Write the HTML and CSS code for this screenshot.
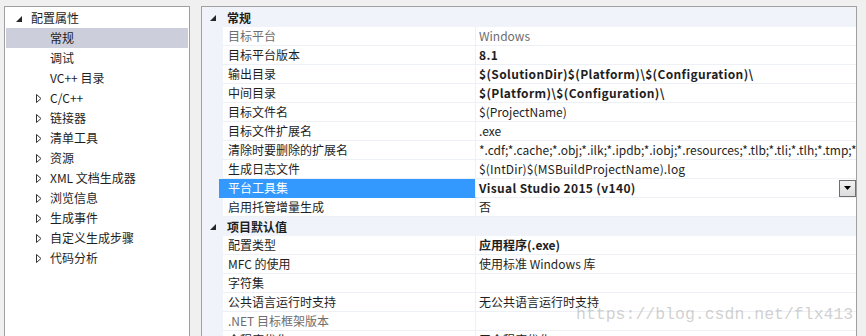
FILE: index.html
```html
<!DOCTYPE html>
<html lang="zh-CN">
<head>
<meta charset="utf-8">
<link rel="stylesheet" href="styles.css">
</head>
<body>
<div class="page">
  <div class="tree">
    <div class="node root"><svg class="exp" width="6" height="6" viewBox="0 0 6 6"><polygon points="6,0 6,6 0,6"/></svg><span>配置属性</span></div>
    <div class="node child sel"><span>常规</span></div>
    <div class="node child"><span>调试</span></div>
    <div class="node child"><span>VC++ 目录</span></div>
    <div class="node child"><svg class="col" width="6" height="9" viewBox="0 0 6 9"><polygon points="0.5,0.5 5,4.5 0.5,8.5"/></svg><span>C/C++</span></div>
    <div class="node child"><svg class="col" width="6" height="9" viewBox="0 0 6 9"><polygon points="0.5,0.5 5,4.5 0.5,8.5"/></svg><span>链接器</span></div>
    <div class="node child"><svg class="col" width="6" height="9" viewBox="0 0 6 9"><polygon points="0.5,0.5 5,4.5 0.5,8.5"/></svg><span>清单工具</span></div>
    <div class="node child"><svg class="col" width="6" height="9" viewBox="0 0 6 9"><polygon points="0.5,0.5 5,4.5 0.5,8.5"/></svg><span>资源</span></div>
    <div class="node child"><svg class="col" width="6" height="9" viewBox="0 0 6 9"><polygon points="0.5,0.5 5,4.5 0.5,8.5"/></svg><span>XML 文档生成器</span></div>
    <div class="node child"><svg class="col" width="6" height="9" viewBox="0 0 6 9"><polygon points="0.5,0.5 5,4.5 0.5,8.5"/></svg><span>浏览信息</span></div>
    <div class="node child"><svg class="col" width="6" height="9" viewBox="0 0 6 9"><polygon points="0.5,0.5 5,4.5 0.5,8.5"/></svg><span>生成事件</span></div>
    <div class="node child"><svg class="col" width="6" height="9" viewBox="0 0 6 9"><polygon points="0.5,0.5 5,4.5 0.5,8.5"/></svg><span>自定义生成步骤</span></div>
    <div class="node child"><svg class="col" width="6" height="9" viewBox="0 0 6 9"><polygon points="0.5,0.5 5,4.5 0.5,8.5"/></svg><span>代码分析</span></div>
  </div>

  <div class="grid">
    <div class="group"><div class="gut"><svg width="6" height="6" viewBox="0 0 6 6"><polygon points="6,0 6,6 0,6"/></svg></div><div class="gtitle">常规</div></div>
    <div class="row"><div class="gut"></div><div class="name dim">目标平台</div><div class="val dim">Windows</div></div>
    <div class="row"><div class="gut"></div><div class="name">目标平台版本</div><div class="val b lat">8.1</div></div>
    <div class="row"><div class="gut"></div><div class="name">输出目录</div><div class="val b lat">$(SolutionDir)$(Platform)\$(Configuration)\</div></div>
    <div class="row"><div class="gut"></div><div class="name">中间目录</div><div class="val b lat">$(Platform)\$(Configuration)\</div></div>
    <div class="row"><div class="gut"></div><div class="name">目标文件名</div><div class="val">$(ProjectName)</div></div>
    <div class="row"><div class="gut"></div><div class="name">目标文件扩展名</div><div class="val">.exe</div></div>
    <div class="row"><div class="gut"></div><div class="name">清除时要删除的扩展名</div><div class="val">*.cdf;*.cache;*.obj;*.ilk;*.ipdb;*.iobj;*.resources;*.tlb;*.tli;*.tlh;*.tmp;*.rsp;*.pgc;*.pgd;*.meta;*.tlog;*.manifest;*.res;*.pch;*.exp;*.idb</div></div>
    <div class="row"><div class="gut"></div><div class="name">生成日志文件</div><div class="val lat2">$(IntDir)$(MSBuildProjectName).log</div></div>
    <div class="row"><div class="gut"></div><div class="name sel">平台工具集</div><div class="val b drop"><span class="lat">Visual Studio 2015 (v140)</span><span class="btn"><svg width="7" height="4" viewBox="0 0 7 4"><polygon points="0,0 7,0 3.5,4"/></svg></span></div></div>
    <div class="row"><div class="gut"></div><div class="name">启用托管增量生成</div><div class="val">否</div></div>
    <div class="group"><div class="gut"><svg width="6" height="6" viewBox="0 0 6 6"><polygon points="6,0 6,6 0,6"/></svg></div><div class="gtitle">项目默认值</div></div>
    <div class="row"><div class="gut"></div><div class="name">配置类型</div><div class="val b">应用程序(.exe)</div></div>
    <div class="row"><div class="gut"></div><div class="name">MFC 的使用</div><div class="val">使用标准 Windows 库</div></div>
    <div class="row"><div class="gut"></div><div class="name">字符集</div><div class="val"></div></div>
    <div class="row"><div class="gut"></div><div class="name">公共语言运行时支持</div><div class="val">无公共语言运行时支持</div></div>
    <div class="row"><div class="gut"></div><div class="name dim">.NET 目标框架版本</div><div class="val"></div></div>
    <div class="row"><div class="gut"></div><div class="name">全程序优化</div><div class="val">无全程序优化</div></div>
  </div>
</div>
<div class="wm">https://blog.csdn.net/flx413</div>
</body>
</html>
```

FILE: styles.css
```css
html, body {
  margin: 0;
  padding: 0;
  width: 866px;
  height: 336px;
  overflow: hidden;
  background: #f0f0f0;
  font-family: "Noto Sans CJK SC", sans-serif;
  font-size: 12px;
  color: #1e1e1e;
}

.page {
  display: flex;
  gap: 11px;
  padding: 6px 0 0 4px;
}

.tree {
  width: 186px;
  height: 340px;
  border: 1px solid #a0a0a0;
  background: #ffffff;
  padding: 1px;
  box-sizing: border-box;
}

.node {
  height: 20px;
  display: flex;
  align-items: center;
  line-height: 20px;
  white-space: nowrap;
}

.node.root {
  padding-left: 10px;
}

.node.root svg {
  margin-right: 9px;
  margin-top: 1px;
  fill: #262626;
}

.node.child {
  padding-left: 44px;
}

.node.child svg {
  margin-left: -14px;
  margin-right: 8px;
}

.node .col {
  fill: none;
  stroke: #333333;
  stroke-width: 1;
}

.node.sel {
  background: #cccedb;
}

.grid {
  width: 656px;
  height: 340px;
  box-sizing: border-box;
  border: 1px solid #a0a0a0;
  background: #f0f4fa;
  padding-top: 1px;
  overflow: hidden;
}

.group {
  height: 19px;
  display: flex;
  align-items: center;
  background: #f0f4fa;
}

.gut {
  width: 21px;
  flex: none;
  height: 100%;
  display: flex;
  align-items: center;
  justify-content: center;
}

.group .gut svg {
  fill: #262626;
}

.gtitle {
  font-weight: bold;
  padding-left: 4px;
}

.row {
  height: 19px;
  display: flex;
}

.name, .val {
  background: #ffffff;
  height: 18px;
  line-height: 18px;
  border-bottom: 1px solid #edf0f5;
  white-space: nowrap;
  overflow: hidden;
}

.name {
  width: 247px;
  flex: none;
  padding-left: 5px;
  border-right: 1px solid #edf0f5;
}

.val {
  flex: 1;
  padding-left: 3px;
}

.dim {
  color: #6d6d6d;
}

.b {
  font-weight: bold;
}

.lat {
  letter-spacing: 0.35px;
}

.lat2 {
  letter-spacing: 0.15px;
}

.name.sel {
  background: #3399ff;
  color: #ffffff;
  box-shadow: -4px 0 0 #3399ff;
  border-bottom-color: #3399ff;
}

.drop {
  display: flex;
  justify-content: space-between;
  align-items: center;
}

.btn {
  width: 15px;
  height: 15px;
  border: 1px solid #6f6f6f;
  background: linear-gradient(#f2f2f2, #dcdcdc);
  display: flex;
  align-items: center;
  justify-content: center;
  letter-spacing: 0;
}

.btn svg {
  fill: #000000;
}

.wm {
  position: absolute;
  left: 576px;
  top: 305px;
  font-family: "Liberation Mono", monospace;
  font-size: 16.5px;
  color: rgba(170, 170, 170, 0.55);
  white-space: nowrap;
}
```
